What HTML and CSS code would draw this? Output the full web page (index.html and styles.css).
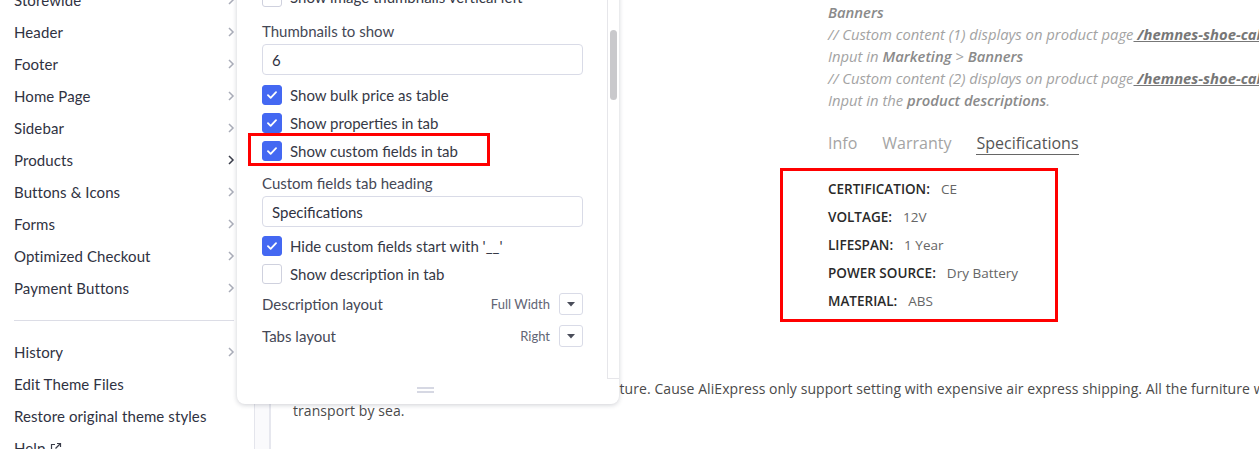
FILE: index.html
```html
<!DOCTYPE html>
<html lang="en">
<head>
<meta charset="utf-8">
<title>Theme Styles</title>
<link rel="stylesheet" href="styles.css">
</head>
<body>
<div class="app">
  <aside class="sidebar">
    <ul class="nav nav-top">
      <li class="nav-item"><span>Storewide</span><svg class="chev" viewBox="0 0 8 12"><path d="M2 2l4 4-4 4"/></svg></li>
      <li class="nav-item"><span>Header</span><svg class="chev" viewBox="0 0 8 12"><path d="M2 2l4 4-4 4"/></svg></li>
      <li class="nav-item"><span>Footer</span><svg class="chev" viewBox="0 0 8 12"><path d="M2 2l4 4-4 4"/></svg></li>
      <li class="nav-item"><span>Home Page</span><svg class="chev" viewBox="0 0 8 12"><path d="M2 2l4 4-4 4"/></svg></li>
      <li class="nav-item"><span>Sidebar</span><svg class="chev" viewBox="0 0 8 12"><path d="M2 2l4 4-4 4"/></svg></li>
      <li class="nav-item active"><span>Products</span><svg class="chev" viewBox="0 0 8 12"><path d="M2 2l4 4-4 4"/></svg></li>
      <li class="nav-item"><span>Buttons &amp; Icons</span><svg class="chev" viewBox="0 0 8 12"><path d="M2 2l4 4-4 4"/></svg></li>
      <li class="nav-item"><span>Forms</span><svg class="chev" viewBox="0 0 8 12"><path d="M2 2l4 4-4 4"/></svg></li>
      <li class="nav-item"><span>Optimized Checkout</span><svg class="chev" viewBox="0 0 8 12"><path d="M2 2l4 4-4 4"/></svg></li>
      <li class="nav-item"><span>Payment Buttons</span><svg class="chev" viewBox="0 0 8 12"><path d="M2 2l4 4-4 4"/></svg></li>
    </ul>
    <hr class="nav-sep">
    <ul class="nav">
      <li class="nav-item"><span>History</span><svg class="chev" viewBox="0 0 8 12"><path d="M2 2l4 4-4 4"/></svg></li>
      <li class="nav-item"><span>Edit Theme Files</span></li>
      <li class="nav-item"><span>Restore original theme styles</span></li>
      <li class="nav-item"><span class="help">Help <svg class="ext" viewBox="0 0 12 12"><path d="M5 2.5H1.5v8h8V7"/><path d="M7 1.5h3.5V5"/><path d="M10.5 1.5L5.5 6.5"/></svg></span></li>
    </ul>
  </aside>

  <main class="preview">
    <div class="gutter"></div>
    <div class="page">
      <div class="product">
        <div class="gallery"></div>
        <div class="details">
          <p class="note">
            <b>Banners</b><br>
            // Custom content (1) displays on product page<a class="lnk"> /hemnes-shoe-cabinet</a><br>
            Input in <b>Marketing</b> &gt; <b>Banners</b><br>
            // Custom content (2) displays on product page<a class="lnk"> /hemnes-shoe-cabinet</a><br>
            Input in the <b>product descriptions</b>.
          </p>
          <div class="tabs">
            <span class="tab">Info</span>
            <span class="tab">Warranty</span>
            <span class="tab current">Specifications</span>
          </div>
          <dl class="specs">
            <div class="spec"><dt>CERTIFICATION:</dt><dd>CE</dd></div>
            <div class="spec"><dt>VOLTAGE:</dt><dd>12V</dd></div>
            <div class="spec"><dt>LIFESPAN:</dt><dd>1 Year</dd></div>
            <div class="spec"><dt>POWER SOURCE:</dt><dd>Dry Battery</dd></div>
            <div class="spec"><dt>MATERIAL:</dt><dd>ABS</dd></div>
          </dl>
        </div>
      </div>
      <p class="desc">We are professional manufacturers of home furniture. Cause AliExpress only support setting with expensive air express shipping. All the furniture will be<br>transport by sea.</p>
    </div>
  </main>

  <section class="panel">
    <div class="panel-body">
      <div class="panel-scroll">
        <div class="check"><span class="box"></span><span>Show image thumbnails vertical left</span></div>
        <div class="field-label">Thumbnails to show</div>
        <div class="input">6</div>
        <div class="check first-after-input"><span class="box on"><svg viewBox="0 0 20 20"><path d="M5.5 10.2l3 3 6-6.4"/></svg></span><span>Show bulk price as table</span></div>
        <div class="check"><span class="box on"><svg viewBox="0 0 20 20"><path d="M5.5 10.2l3 3 6-6.4"/></svg></span><span>Show properties in tab</span></div>
        <div class="check marked"><span class="box on"><svg viewBox="0 0 20 20"><path d="M5.5 10.2l3 3 6-6.4"/></svg></span><span>Show custom fields in tab</span><span class="highlight"></span></div>
        <div class="field-label gap">Custom fields tab heading</div>
        <div class="input">Specifications</div>
        <div class="check after-input2"><span class="box on"><svg viewBox="0 0 20 20"><path d="M5.5 10.2l3 3 6-6.4"/></svg></span><span>Hide custom fields start with '__'</span></div>
        <div class="check"><span class="box"></span><span>Show description in tab</span></div>
        <div class="select-row"><span class="sel-label">Description layout</span><span class="sel-value">Full Width</span><span class="sel-btn"><svg viewBox="0 0 8 5"><path d="M0 0h8L4 4.6z"/></svg></span></div>
        <div class="select-row"><span class="sel-label">Tabs layout</span><span class="sel-value">Right</span><span class="sel-btn"><svg viewBox="0 0 8 5"><path d="M0 0h8L4 4.6z"/></svg></span></div>
      </div>
      <div class="track"><div class="thumb"></div></div>
    </div>
    <div class="panel-foot"><span class="grip"></span></div>
  </section>
</div>
</body>
</html>
```

FILE: styles.css
```css
html, body {
  margin: 0;
  padding: 0;
  width: 1259px;
  height: 449px;
  overflow: hidden;
  background: #fff;
}

.app {
  position: relative;
  display: flex;
  height: 449px;
  font-family: Lato, "Noto Sans", sans-serif;
  color: #2f3242;
}

/* ---------- Sidebar ---------- */
.sidebar {
  width: 254px;
  flex: none;
  box-sizing: border-box;
  padding: 0 20px 0 14px;
}

.nav {
  list-style: none;
  margin: 0;
  padding: 0;
}

.nav-top {
  margin-top: -16px;
}

.nav-item {
  display: flex;
  align-items: center;
  justify-content: space-between;
  height: 32px;
  font-size: 15px;
  letter-spacing: 0.1px;
  color: #2f3242;
}

.chev {
  width: 8px;
  height: 12px;
  fill: none;
  stroke: #a9acb8;
  stroke-width: 1.5;
  margin-right: -1px;
}

.nav-item.active .chev {
  stroke: #3a3d4a;
}

.nav-sep {
  border: 0;
  border-top: 1px solid #dcdde6;
  margin: 16px 0 15px;
  height: 0;
}

.help {
  display: inline-flex;
  align-items: center;
  gap: 4px;
}

.ext {
  width: 12px;
  height: 12px;
  fill: none;
  stroke: #3a3d4a;
  stroke-width: 1.2;
}

/* ---------- Preview ---------- */
.preview {
  flex: 1;
  display: flex;
  border-left: 1px solid #e4e5ec;
  min-width: 0;
}

.gutter {
  width: 14px;
  flex: none;
  background: #fafafc;
  border-right: 2px solid #e6e7ee;
}

.page {
  flex: 1;
  min-width: 0;
  font-family: "Open Sans", "Noto Sans", sans-serif;
}

.product {
  display: flex;
}

.gallery {
  width: 557px;
  flex: none;
}

.details {
  padding-top: 1px;
  white-space: nowrap;
}

.note {
  margin: 0;
  font-size: 14.8px;
  line-height: 22px;
  font-style: italic;
  color: #a3a3a3;
}

.note b {
  font-weight: 600;
  color: #8a8a8a;
}

.lnk {
  font-weight: 700;
  color: #777;
  text-decoration: underline;
}

.tabs {
  display: flex;
  gap: 25px;
  margin-top: 22px;
  font-size: 16px;
  line-height: 21px;
}

.tab {
  color: #a4a4a4;
}

.tab.current {
  color: #555;
  border-bottom: 1px solid #666;
}

.specs {
  width: 278px;
  box-sizing: border-box;
  margin: 13px 0 0 -48px;
  padding: 4px 0 4px 45px;
  border: 3px solid #f00;
}

.spec {
  display: flex;
  height: 28px;
  align-items: center;
  font-size: 13.5px;
}

.spec dt {
  font-weight: 600;
  color: #2a2a2a;
  margin-right: 11px;
}

.spec dd {
  margin: 0;
  color: #666;
}

.desc {
  margin: 56px 0 0;
  padding-left: 22px;
  font-size: 14px;
  line-height: 22px;
  color: #4a4a4a;
  white-space: nowrap;
  letter-spacing: 0.07px;
}

/* ---------- Settings panel (overlay) ---------- */
.panel {
  position: absolute;
  left: 237px;
  top: -17px;
  width: 382px;
  height: 421px;
  background: #fff;
  border-radius: 8px;
  box-shadow: 0 1px 5px rgba(30, 35, 60, 0.22);
  display: flex;
  flex-direction: column;
  overflow: hidden;
  color: #363946;
  font-size: 15px;
}

.panel-body {
  display: flex;
  height: 396px;
}

.panel-scroll {
  flex: 1;
  padding: 0 24px 0 25px;
}

.track {
  width: 12px;
  flex: none;
  border-left: 1px solid #e6e6ea;
  border-bottom: 1px solid #e6e6ea;
  box-sizing: border-box;
}

.thumb {
  width: 7px;
  height: 70px;
  margin: 47px 0 0 2px;
  background: #c9c9cc;
  border-radius: 4px;
}

.panel-foot {
  flex: 1;
  display: flex;
  justify-content: center;
  padding-top: 8px;
}

.grip {
  width: 17px;
  height: 2px;
  border-top: 2px solid #d6d8e3;
  border-bottom: 2px solid #d6d8e3;
  margin-left: -6px;
}

.check {
  position: relative;
  display: flex;
  align-items: center;
  gap: 8px;
  height: 28px;
}

.box {
  width: 20px;
  height: 20px;
  flex: none;
  box-sizing: border-box;
  border: 1px solid #cfd1de;
  border-radius: 3px;
  background: #fff;
}

.box.on {
  background: #4468f2;
  border-color: #4468f2;
}

.box svg {
  display: block;
  width: 18px;
  height: 18px;
  fill: none;
  stroke: #fff;
  stroke-width: 2;
  stroke-linecap: round;
  stroke-linejoin: round;
}

.highlight {
  position: absolute;
  left: -14px;
  top: -4px;
  width: 242px;
  height: 33px;
  box-sizing: border-box;
  border: 3px solid #f00;
}

.field-label {
  margin-top: 9px;
  line-height: 22px;
  color: #454856;
}

.field-label.gap {
  margin-top: 7px;
}

.input {
  margin-top: 2px;
  height: 31px;
  box-sizing: border-box;
  border: 1px solid #d9dbe7;
  border-radius: 4px;
  padding: 0 9px;
  display: flex;
  align-items: center;
  color: #2f3242;
}

.first-after-input {
  margin-top: 6px;
}

.after-input2 {
  margin-top: 5px;
}

.select-row {
  display: flex;
  align-items: center;
  height: 32px;
}

.sel-label {
  flex: 1;
  color: #454856;
}

.sel-value {
  font-size: 13px;
  color: #626574;
  margin-right: 9px;
}

.sel-btn {
  width: 24px;
  height: 22px;
  box-sizing: border-box;
  border: 1px solid #d9dbe7;
  border-radius: 3px;
  display: flex;
  align-items: center;
  justify-content: center;
}

.sel-btn svg {
  width: 8px;
  height: 5px;
  fill: #4a4d5a;
}
```
